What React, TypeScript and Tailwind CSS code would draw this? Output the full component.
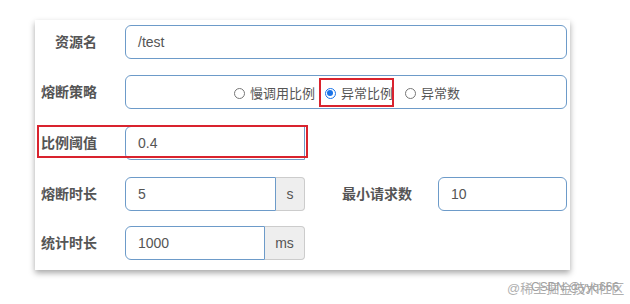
import React from "react";

const font = { fontFamily: '"Liberation Sans", "Noto Sans CJK SC", sans-serif' };

function Label({ children, w = "w-[62px]" }: { children: React.ReactNode; w?: string }) {
  return (
    <div className={`${w} shrink-0 text-right text-[14px] font-bold text-[#555] leading-none`}>{children}</div>
  );
}

function Radio({ checked, label }: { checked?: boolean; label: string }) {
  return (
    <span className="flex items-center gap-[5px]">
      {checked ? (
        <span className="w-[11px] h-[11px] rounded-full border-[1.5px] border-[#1a73e8] flex items-center justify-center">
          <span className="w-[6px] h-[6px] rounded-full bg-[#1a73e8]" />
        </span>
      ) : (
        <span className="w-[11px] h-[11px] rounded-full border border-[#767676] bg-white" />
      )}
      <span className="text-[13px] text-[#555] leading-none">{label}</span>
    </span>
  );
}

export default function App() {
  return (
    <div className="w-[630px] h-[304px] bg-white relative overflow-hidden" style={font}>
      <div className="absolute left-[35px] top-[20px] w-[535px] h-[250px] bg-white shadow-[0_3px_6px_rgba(0,0,0,0.35)]" />
      <div className="relative ml-[35px] pt-[25px] w-[535px] flex flex-col">
        {/* row 1 */}
        <div className="flex items-center h-[34px]">
          <Label>资源名</Label>
          <div className="ml-[28px] w-[442px] h-[34px] border border-[#6d9bc9] rounded-[6px] flex items-center px-[12px] text-[14px] text-[#555]">
            /test
          </div>
        </div>
        {/* row 2 */}
        <div className="mt-[16px] flex items-center h-[34px]">
          <Label>熔断策略</Label>
          <div className="ml-[28px] w-[442px] h-[34px] border border-[#6d9bc9] rounded-[6px] flex items-center justify-center gap-[10px] pt-[2px] pl-[2px]">
            <Radio label="慢调用比例" />
            <span className="relative flex items-center">
              <span className="absolute -left-[6px] -top-[9px] w-[75px] h-[29px] border-2 border-[#d9232e]" />
              <Radio checked label="异常比例" />
            </span>
            <span className="ml-[2px]">
              <Radio label="异常数" />
            </span>
          </div>
        </div>
        {/* row 3 */}
        <div className="mt-[17px] flex items-center h-[34px] relative">
          <div className="absolute left-[2px] -top-[1px] w-[271px] h-[33px] border-2 border-[#d9232e]" />
          <Label>比例阈值</Label>
          <div className="ml-[28px] w-[180px] h-[34px] border border-[#6d9bc9] rounded-l-[6px] flex items-center px-[12px] text-[14px] text-[#555]">
            0.4
          </div>
        </div>
        {/* row 4 */}
        <div className="mt-[17px] flex items-center h-[34px]">
          <Label>熔断时长</Label>
          <div className="ml-[28px] flex h-[34px]">
            <div className="w-[151px] border border-[#6d9bc9] rounded-l-[6px] flex items-center px-[12px] text-[14px] text-[#555]">5</div>
            <div className="w-[29px] bg-[#eee] border border-l-0 border-[#ccc] rounded-r-[4px] flex items-center justify-center text-[14px] text-[#555]">s</div>
          </div>
          <div className="ml-[36px]">
            <Label w="w-[71px]">最小请求数</Label>
          </div>
          <div className="ml-[26px] w-[129px] h-[34px] border border-[#6d9bc9] rounded-[6px] flex items-center px-[12px] text-[14px] text-[#555]">
            10
          </div>
        </div>
        {/* row 5 */}
        <div className="mt-[15px] flex items-center h-[34px]">
          <Label>统计时长</Label>
          <div className="ml-[28px] flex h-[34px]">
            <div className="w-[140px] border border-[#6d9bc9] rounded-l-[6px] flex items-center px-[12px] text-[14px] text-[#555]">1000</div>
            <div className="w-[40px] bg-[#eee] border border-l-0 border-[#ccc] rounded-r-[4px] flex items-center justify-center text-[14px] text-[#555]">ms</div>
          </div>
        </div>
      </div>
      <div className="absolute left-[507px] top-[282px] text-[13px] text-[#b0b0b0] leading-none whitespace-nowrap">@稀土掘金技术社区</div>
      <div className="absolute left-[531px] top-[281px] text-[12px] text-[#a0a0a0] leading-none whitespace-nowrap">CSDN @yyq666</div>
    </div>
  );
}
